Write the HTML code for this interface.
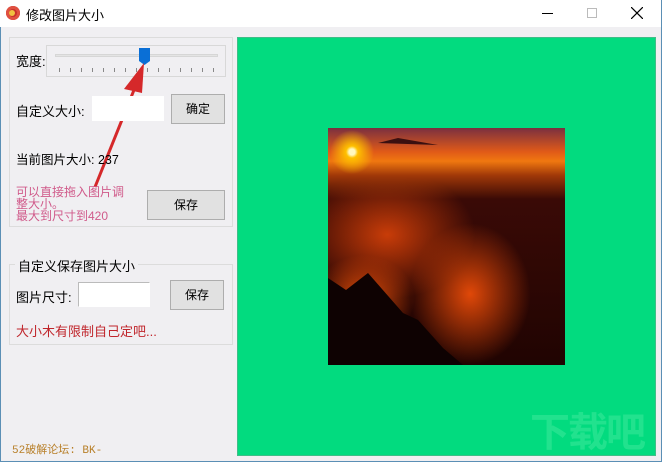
<!DOCTYPE html>
<html><head><meta charset="utf-8"><style>
*{margin:0;padding:0;box-sizing:border-box}
body{width:662px;height:462px;overflow:hidden;background:#f0eff2;font-family:"Liberation Sans","Noto Sans CJK SC",sans-serif;font-size:12px;color:#000;position:relative}
.abs{position:absolute}
.btn{position:absolute;background:#e1e1e1;border:1px solid #adadad;text-align:center;font-size:12px}
.inp{position:absolute;background:#fff;border:1px solid #c8c8c8}
</style></head><body>
<div class="abs" style="left:0;top:0;width:662px;height:27px;background:#fff"></div>
<div class="abs" style="left:6px;top:6px;width:14px;height:14px;border-radius:50%;background:#c8302a;box-shadow:inset 0 0 0 3px #e05040"></div>
<div class="abs" style="left:9px;top:10px;width:6px;height:6px;border-radius:50%;background:#f0c040"></div>
<div class="abs" style="left:26px;top:5px;font-size:13px">修改图片大小</div>
<div class="abs" style="left:542px;top:13px;width:11px;height:1px;background:#000"></div>
<div class="abs" style="left:587px;top:8px;width:10px;height:10px;border:1px solid #bbb"></div>
<svg class="abs" style="left:631px;top:7px" width="12" height="12"><path d="M0 0L12 12M12 0L0 12" stroke="#000" stroke-width="1.2"/></svg>
<div class="abs" style="left:0;top:27px;width:1px;height:435px;background:#5b8fb5"></div>
<div class="abs" style="left:661px;top:0;width:1px;height:462px;background:#5b8fb5"></div>
<div class="abs" style="left:0;top:461px;width:662px;height:1px;background:#5b8fb5"></div>

<div class="abs" style="left:9px;top:37px;width:224px;height:190px;border:1px solid #dcdcdc"></div>
<div class="abs" style="left:16px;top:51px;font-size:13px">宽度:</div>
<div class="abs" style="left:46px;top:45px;width:180px;height:32px;border:1px solid #d8d8d8;background:#f0eff2"></div>
<div class="abs" style="left:55px;top:54px;width:163px;height:3px;background:#e4e4e4;border:1px solid #d6d6d6"></div>
<div class="abs" style="left:59px;top:68px;width:155px;height:4px;background:repeating-linear-gradient(90deg,#888 0 1px,transparent 1px 11px)"></div>
<svg class="abs" style="left:139px;top:48px" width="12" height="18"><path d="M0 0H11V13L5.5 17L0 13Z" fill="#0a6fd6"/></svg>
<svg class="abs" style="left:80px;top:55px" width="80" height="140"><path d="M15 132L56 30" stroke="#d5282a" stroke-width="3"/><path d="M64 8L44 34L62 38Z" fill="#d5282a"/></svg>
<div class="abs" style="left:16px;top:101px;font-size:13px">自定义大小:</div>
<div class="inp" style="left:92px;top:96px;width:72px;height:25px;border-color:#fff"></div>
<div class="btn" style="left:171px;top:94px;width:54px;height:30px;line-height:28px">确定</div>
<div class="abs" style="left:16px;top:149px;font-size:12.5px">当前图片大小: 237</div>
<div class="abs" style="left:16px;top:186px;color:#d05a8a;line-height:12px;width:116px">可以直接拖入图片调整大小。<br>最大到尺寸到420</div>
<div class="btn" style="left:147px;top:190px;width:78px;height:30px;line-height:28px">保存</div>

<div class="abs" style="left:9px;top:264px;width:224px;height:81px;border:1px solid #dcdcdc"></div>
<div class="abs" style="left:15px;top:256px;background:#f0eff2;padding:0 3px;font-size:13px">自定义保存图片大小</div>
<div class="abs" style="left:16px;top:287px;font-size:13px">图片尺寸:</div>
<div class="inp" style="left:78px;top:282px;width:72px;height:25px;border-color:#bbb #fff #fff #bbb"></div>
<div class="btn" style="left:170px;top:280px;width:54px;height:30px;line-height:28px">保存</div>
<div class="abs" style="left:16px;top:321px;color:#c0262c;font-size:13px">大小木有限制自己定吧...</div>
<div class="abs" style="left:12px;top:441px;color:#b8802a;font-size:11px;font-family:'Liberation Mono','Noto Sans CJK SC',monospace">52破解论坛: BK-</div>

<div class="abs" style="left:237px;top:37px;width:419px;height:419px;background:#02db7f;border:1px solid #3fbe88"></div>
<div class="abs" style="left:328px;top:128px;width:237px;height:237px;overflow:hidden;background:
radial-gradient(circle at 24px 24px,#fff8c0 0 3px,#ffc000 6px,rgba(255,140,0,0) 22px),
linear-gradient(180deg,#7a3040 0%,#e05a18 10%,#f07810 14%,#a03808 20%,rgba(0,0,0,0) 30%),
radial-gradient(ellipse at 25% 45%,#c83c08 0,rgba(200,50,0,0) 35%),
radial-gradient(ellipse at 60% 70%,#e04808 0,rgba(200,50,0,0) 30%),
radial-gradient(ellipse at 15% 72%,#e85008 0,rgba(200,50,0,0) 18%),
linear-gradient(180deg,#3a0a06 30%,#200402 100%)">
<svg width="237" height="237" style="position:absolute;left:0;top:0"><path d="M0 150L18 162L40 145L75 185L90 192L115 220L135 237H0Z" fill="#0e0202"/><path d="M50 15L70 10L110 17Z" fill="#3a1010"/></svg>
</div>
<div class="abs" style="left:530px;top:400px;font-size:40px;font-weight:bold;color:#22e28e;letter-spacing:-2px">下载吧</div>
</body></html>
